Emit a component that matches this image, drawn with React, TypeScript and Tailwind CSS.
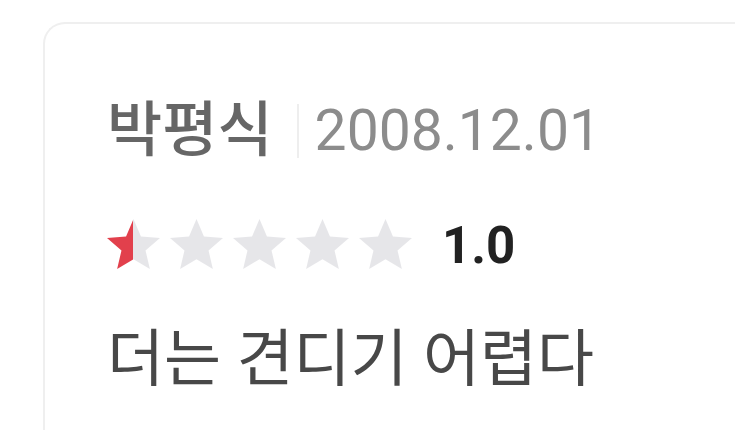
const STAR = "M12 17.27L18.18 21l-1.64-7.03L22 9.24l-7.19-.61L12 2 9.19 8.63 2 9.24l5.46 4.73L5.82 21z";

function Star({ fill, index }: { fill: number; index: number }) {
  const id = `star-fill-${index}`;
  return (
    <svg viewBox="2 2 20 19" className="h-[50px] w-[53px]" preserveAspectRatio="none">
      <defs>
        <linearGradient id={id} x1="0" x2="1" y1="0" y2="0">
          <stop offset={`${fill * 100}%`} stopColor="#e2404c" />
          <stop offset={`${fill * 100}%`} stopColor="#e6e6e9" />
        </linearGradient>
      </defs>
      <path d={STAR} fill={`url(#${id})`} />
    </svg>
  );
}

export default function App() {
  // score out of 10, shown as five stars
  const score = 1.0;
  const stars = [0, 1, 2, 3, 4].map((i) => Math.max(0, Math.min(1, score - i * 2) / 2));

  return (
    <div className="h-[430px] w-[735px] overflow-hidden bg-white pl-[43px] pt-[22px] font-['Roboto','Noto_Sans_CJK_KR',sans-serif]">
      <div className="h-[420px] rounded-tl-[22px] border-l-2 border-t-2 border-[#efefef] pl-[62px] pt-[75px]">
        <div className="flex items-center">
          <span className="text-[60px] font-medium leading-[64px] text-[#666666]">박평식</span>
          <span className="ml-[24px] mr-[16px] h-[54px] w-[2px] bg-[#eeeeee]" />
          <span className="text-[57px] leading-[64px] text-[#8c8c8c]">2008.12.01</span>
        </div>

        <div className="mt-[53px] flex items-center">
          <div className="flex gap-[10px]">
            {stars.map((f, i) => (
              <Star key={i} fill={f} index={i} />
            ))}
          </div>
          <span className="ml-[30px] mt-[4px] text-[51px] font-bold leading-[52px] text-[#222222]">{score.toFixed(1)}</span>
        </div>

        <p className="mt-[54px] text-[62px] leading-[68px] text-[#484848]">더는 견디기 어렵다</p>
      </div>
    </div>
  );
}
